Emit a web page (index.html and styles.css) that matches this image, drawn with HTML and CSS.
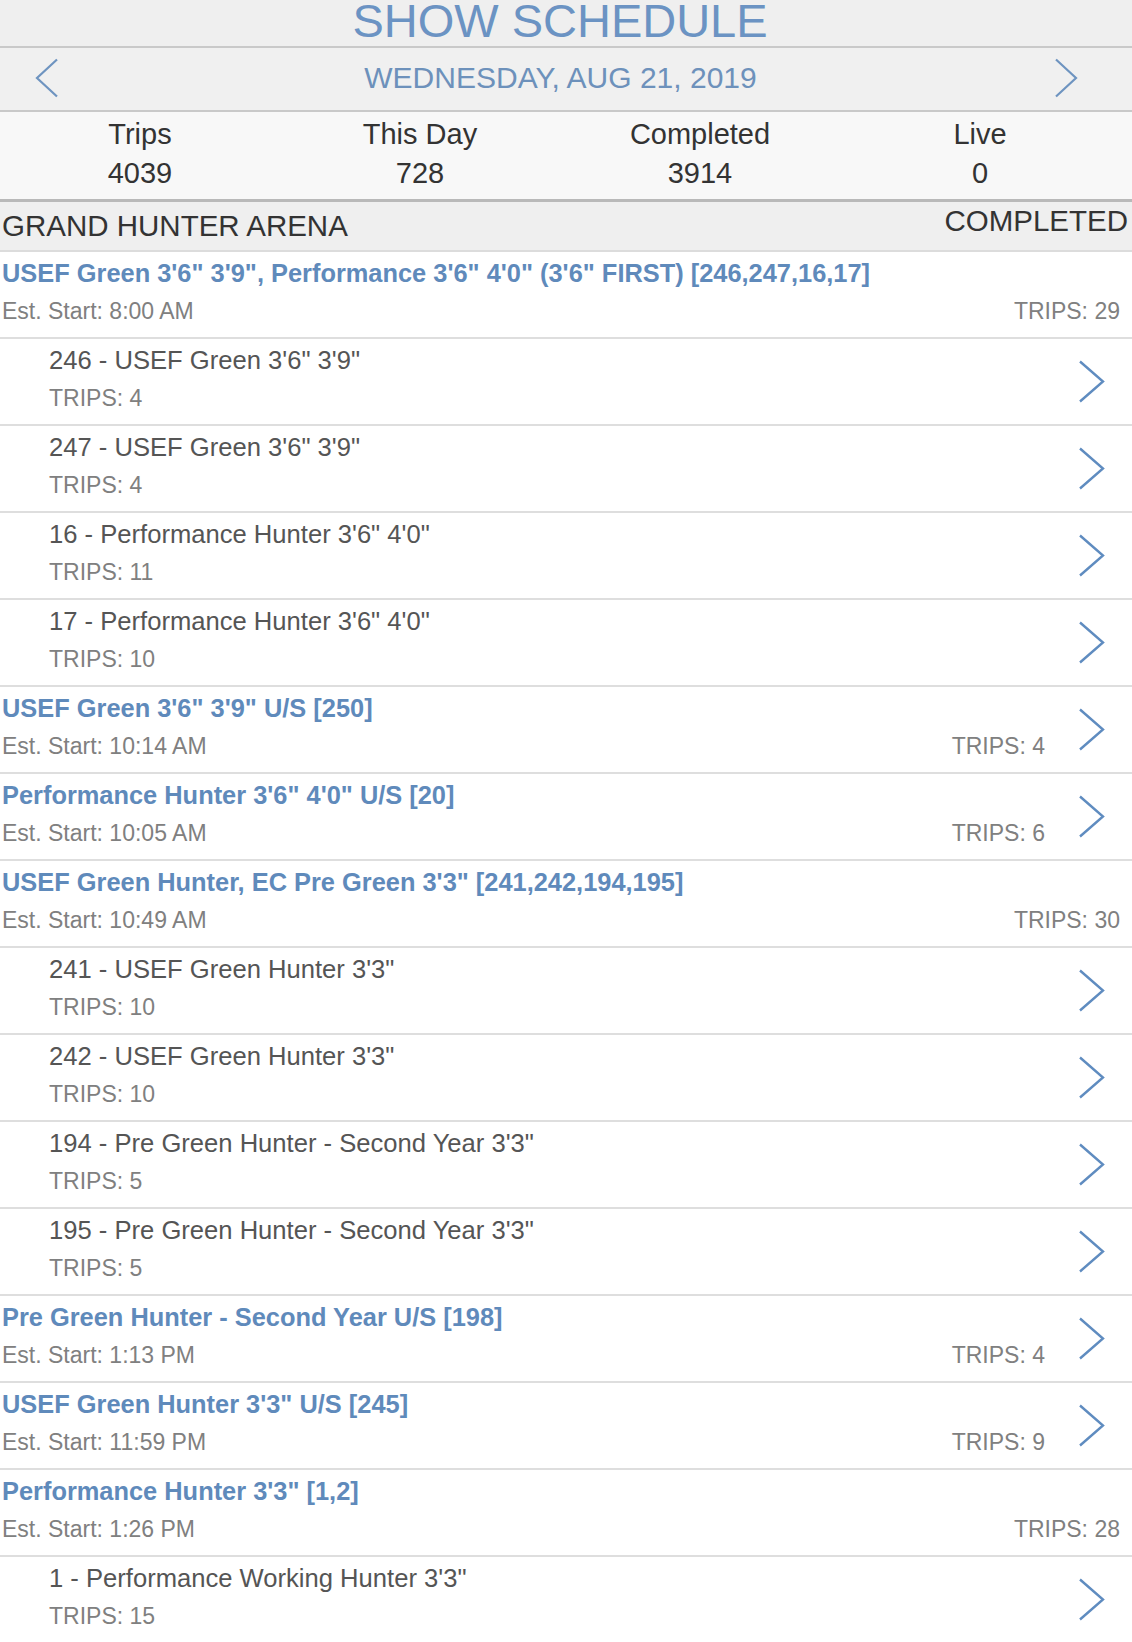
FILE: index.html
```html
<!DOCTYPE html>
<html lang="en">
<head>
<meta charset="utf-8">
<title>Show Schedule</title>
<link rel="stylesheet" href="styles.css">
</head>
<body>
<div class="page">
  <header class="title-bar">SHOW SCHEDULE</header>
  <div class="date-bar">
    <svg class="nav-chev" viewBox="0 0 24 40"><polyline points="22,1.5 2,20 22,38.5"/></svg>
    <span class="date-text">WEDNESDAY, AUG 21, 2019</span>
    <svg class="nav-chev" viewBox="0 0 24 40"><polyline points="2,1.5 22,20 2,38.5"/></svg>
  </div>
  <div class="stats">
    <div class="stat"><div>Trips</div><div>4039</div></div>
    <div class="stat"><div>This Day</div><div>728</div></div>
    <div class="stat"><div>Completed</div><div>3914</div></div>
    <div class="stat"><div>Live</div><div>0</div></div>
  </div>
  <div class="arena-bar">
    <span class="arena-name">GRAND HUNTER ARENA</span>
    <span class="arena-status">COMPLETED</span>
  </div>

  <div class="row group solo">
    <div class="content">
      <div class="g-title">USEF Green 3'6" 3'9", Performance 3'6" 4'0" (3'6" FIRST) [246,247,16,17]</div>
      <div class="sub"><span>Est. Start: 8:00 AM</span><span>TRIPS: 29</span></div>
    </div>
  </div>
  <div class="row child">
    <div class="content">
      <div class="c-title">246 - USEF Green 3'6" 3'9"</div>
      <div class="sub"><span>TRIPS: 4</span></div>
    </div>
    <svg class="chev" viewBox="0 0 27 43"><polyline points="2,1.5 25,21.5 2,41.5"/></svg>
  </div>
  <div class="row child">
    <div class="content">
      <div class="c-title">247 - USEF Green 3'6" 3'9"</div>
      <div class="sub"><span>TRIPS: 4</span></div>
    </div>
    <svg class="chev" viewBox="0 0 27 43"><polyline points="2,1.5 25,21.5 2,41.5"/></svg>
  </div>
  <div class="row child">
    <div class="content">
      <div class="c-title">16 - Performance Hunter 3'6" 4'0"</div>
      <div class="sub"><span>TRIPS: 11</span></div>
    </div>
    <svg class="chev" viewBox="0 0 27 43"><polyline points="2,1.5 25,21.5 2,41.5"/></svg>
  </div>
  <div class="row child">
    <div class="content">
      <div class="c-title">17 - Performance Hunter 3'6" 4'0"</div>
      <div class="sub"><span>TRIPS: 10</span></div>
    </div>
    <svg class="chev" viewBox="0 0 27 43"><polyline points="2,1.5 25,21.5 2,41.5"/></svg>
  </div>
  <div class="row group">
    <div class="content">
      <div class="g-title">USEF Green 3'6" 3'9" U/S [250]</div>
      <div class="sub"><span>Est. Start: 10:14 AM</span><span>TRIPS: 4</span></div>
    </div>
    <svg class="chev" viewBox="0 0 27 43"><polyline points="2,1.5 25,21.5 2,41.5"/></svg>
  </div>
  <div class="row group">
    <div class="content">
      <div class="g-title">Performance Hunter 3'6" 4'0" U/S [20]</div>
      <div class="sub"><span>Est. Start: 10:05 AM</span><span>TRIPS: 6</span></div>
    </div>
    <svg class="chev" viewBox="0 0 27 43"><polyline points="2,1.5 25,21.5 2,41.5"/></svg>
  </div>
  <div class="row group solo">
    <div class="content">
      <div class="g-title">USEF Green Hunter, EC Pre Green 3'3" [241,242,194,195]</div>
      <div class="sub"><span>Est. Start: 10:49 AM</span><span>TRIPS: 30</span></div>
    </div>
  </div>
  <div class="row child">
    <div class="content">
      <div class="c-title">241 - USEF Green Hunter 3'3"</div>
      <div class="sub"><span>TRIPS: 10</span></div>
    </div>
    <svg class="chev" viewBox="0 0 27 43"><polyline points="2,1.5 25,21.5 2,41.5"/></svg>
  </div>
  <div class="row child">
    <div class="content">
      <div class="c-title">242 - USEF Green Hunter 3'3"</div>
      <div class="sub"><span>TRIPS: 10</span></div>
    </div>
    <svg class="chev" viewBox="0 0 27 43"><polyline points="2,1.5 25,21.5 2,41.5"/></svg>
  </div>
  <div class="row child">
    <div class="content">
      <div class="c-title">194 - Pre Green Hunter - Second Year 3'3"</div>
      <div class="sub"><span>TRIPS: 5</span></div>
    </div>
    <svg class="chev" viewBox="0 0 27 43"><polyline points="2,1.5 25,21.5 2,41.5"/></svg>
  </div>
  <div class="row child">
    <div class="content">
      <div class="c-title">195 - Pre Green Hunter - Second Year 3'3"</div>
      <div class="sub"><span>TRIPS: 5</span></div>
    </div>
    <svg class="chev" viewBox="0 0 27 43"><polyline points="2,1.5 25,21.5 2,41.5"/></svg>
  </div>
  <div class="row group">
    <div class="content">
      <div class="g-title">Pre Green Hunter - Second Year U/S [198]</div>
      <div class="sub"><span>Est. Start: 1:13 PM</span><span>TRIPS: 4</span></div>
    </div>
    <svg class="chev" viewBox="0 0 27 43"><polyline points="2,1.5 25,21.5 2,41.5"/></svg>
  </div>
  <div class="row group">
    <div class="content">
      <div class="g-title">USEF Green Hunter 3'3" U/S [245]</div>
      <div class="sub"><span>Est. Start: 11:59 PM</span><span>TRIPS: 9</span></div>
    </div>
    <svg class="chev" viewBox="0 0 27 43"><polyline points="2,1.5 25,21.5 2,41.5"/></svg>
  </div>
  <div class="row group solo">
    <div class="content">
      <div class="g-title">Performance Hunter 3'3" [1,2]</div>
      <div class="sub"><span>Est. Start: 1:26 PM</span><span>TRIPS: 28</span></div>
    </div>
  </div>
  <div class="row child">
    <div class="content">
      <div class="c-title">1 - Performance Working Hunter 3'3"</div>
      <div class="sub"><span>TRIPS: 15</span></div>
    </div>
    <svg class="chev" viewBox="0 0 27 43"><polyline points="2,1.5 25,21.5 2,41.5"/></svg>
  </div>
</div>
</body>
</html>
```

FILE: styles.css
```css
* { box-sizing: border-box; }

html, body {
  margin: 0;
  padding: 0;
  background: #ffffff;
}

body {
  font-family: "Liberation Sans", Arial, sans-serif;
  color: #333333;
}

.page {
  width: 1132px;
}

.title-bar {
  height: 48px;
  background: #efefef;
  border-bottom: 2px solid #c9c9c9;
  text-align: center;
  font-size: 47px;
  line-height: 42px;
  padding-right: 12px;
  color: #6b93c3;
  overflow: hidden;
}

.date-bar {
  height: 64px;
  background: #f0f0f0;
  border-bottom: 2px solid #c9c9c9;
  display: flex;
  align-items: center;
  justify-content: space-between;
  padding: 0 54px 2px 35px;
}

.date-text {
  font-size: 30px;
  color: #6d91bb;
  padding-left: 8px;
}

.nav-chev {
  width: 24px;
  height: 40px;
  fill: none;
  stroke: #6e94c0;
  stroke-width: 2.2;
}

.stats {
  height: 90px;
  background: #f8f8f8;
  border-bottom: 3px solid #b9b9b9;
  display: grid;
  grid-template-columns: repeat(4, 1fr);
  padding: 3px 12px 0 0;
}

.stat {
  text-align: center;
  font-size: 29px;
  line-height: 39px;
  color: #333333;
}

.arena-bar {
  height: 50px;
  background: #efefef;
  border-bottom: 2px solid #dcdcdc;
  display: flex;
  justify-content: space-between;
  padding: 0 4px 0 2px;
  font-size: 29.5px;
  color: #333333;
}

.arena-name {
  line-height: 48px;
}

.arena-status {
  line-height: 38px;
}

.row {
  height: 87px;
  border-bottom: 2px solid #dedede;
  display: flex;
  align-items: center;
  background: #ffffff;
}

.content {
  flex: 1;
  min-width: 0;
  align-self: flex-start;
  padding-top: 6px;
}

.group .content {
  padding-left: 2px;
}

.solo .content {
  padding-right: 12px;
}

.child .content {
  padding-left: 49px;
}

.g-title {
  font-size: 25.4px;
  font-weight: bold;
  line-height: 30px;
  color: #5f8abb;
  white-space: nowrap;
}

.c-title {
  font-size: 25.6px;
  line-height: 30px;
  color: #555555;
  white-space: nowrap;
}

.sub {
  margin-top: 8px;
  display: flex;
  justify-content: space-between;
  font-size: 23px;
  line-height: 30px;
  color: #808080;
}

.chev {
  flex: none;
  width: 27px;
  height: 43px;
  margin: 0 27px 0 33px;
  fill: none;
  stroke: #5f8cc0;
  stroke-width: 2.4;
}
```
